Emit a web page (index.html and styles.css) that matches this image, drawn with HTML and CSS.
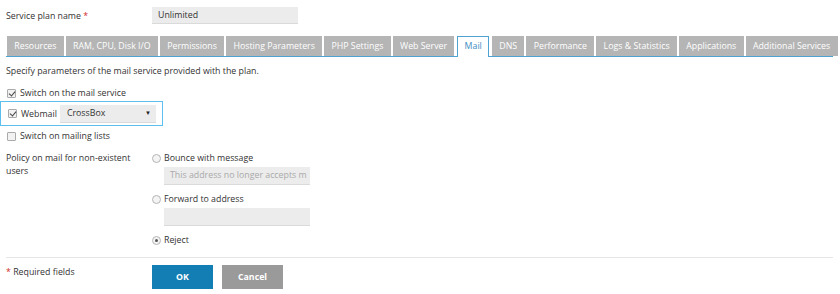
FILE: index.html
```html
<!DOCTYPE html>
<html lang="en">
<head>
  <meta charset="UTF-8">
  <title>Service plan - Mail</title>
  <link rel="stylesheet" href="styles.css">
</head>
<body>

  <div class="form-row name-row">
    <label class="field-label">Service plan name <span class="req">*</span></label>
    <input class="text-input name-input" type="text" value="Unlimited">
  </div>

  <ul class="tabs">
    <li class="tab">Resources</li>
    <li class="tab">RAM, CPU, Disk I/O</li>
    <li class="tab">Permissions</li>
    <li class="tab">Hosting Parameters</li>
    <li class="tab">PHP Settings</li>
    <li class="tab">Web Server</li>
    <li class="tab active">Mail</li>
    <li class="tab">DNS</li>
    <li class="tab">Performance</li>
    <li class="tab">Logs &amp; Statistics</li>
    <li class="tab">Applications</li>
    <li class="tab">Additional Services</li>
  </ul>

  <p class="hint">Specify parameters of the mail service provided with the plan.</p>

  <label class="check-row">
    <span class="check checked"></span> Switch on the mail service
  </label>

  <div class="webmail-box">
    <label class="check-row inline">
      <span class="check checked"></span> Webmail
    </label>
    <div class="select">CrossBox <span class="caret">&#9660;</span></div>
  </div>

  <label class="check-row">
    <span class="check"></span> Switch on mailing lists
  </label>

  <div class="form-row policy-row">
    <div class="field-label">Policy on mail for non-existent users</div>
    <div class="radio-group">
      <label class="radio-row"><span class="radio"></span> Bounce with message</label>
      <div class="text-input sub-input placeholder">This address no longer accepts m</div>
      <label class="radio-row"><span class="radio"></span> Forward to address</label>
      <div class="text-input sub-input"></div>
      <label class="radio-row"><span class="radio selected"></span> Reject</label>
    </div>
  </div>

  <div class="footer">
    <div class="field-label"><span class="req">*</span> Required fields</div>
    <div class="buttons">
      <button class="btn btn-ok">OK</button>
      <button class="btn btn-cancel">Cancel</button>
    </div>
  </div>

</body>
</html>
```

FILE: styles.css
```css
* {
  box-sizing: border-box;
  margin: 0;
  padding: 0;
}
body {
  font-family: "Open Sans", Arial, sans-serif;
  font-size: 8.8px;
  color: #333;
  background: #fff;
  padding: 0 7px 0 6px;
}
.form-row {
  display: flex;
}
.field-label {
  width: 146px;
  flex-shrink: 0;
}
.req {
  color: #d02b2b;
}
.name-row {
  align-items: center;
  padding-top: 7px;
  height: 24px;
}
.text-input {
  font-family: inherit;
  font-size: 8.8px;
  color: #333;
  background: #ececec;
  border: none;
  border-bottom: 1px solid #dadada;
  height: 17px;
  padding: 0 6px;
  outline: none;
}
.name-input {
  width: 146px;
}
.tabs {
  list-style: none;
  display: flex;
  gap: 2px;
  margin-top: 12px;
  padding-left: 1px;
  border-bottom: 1px solid #4fa3d2;
  height: 21px;
}
.tab {
  background: #b5b5b5;
  color: #fff;
  height: 20px;
  line-height: 20px;
  padding: 0 7.3px;
  white-space: nowrap;
}
.tab.active {
  background: #fff;
  color: #3c8dc4;
  border: 1px solid #4fa3d2;
  border-bottom: none;
  height: 21px;
  line-height: 19px;
  padding: 0 6.2px;
  margin: 0 1px;
}
.hint {
  margin-top: 8px;
  line-height: 12px;
}
.check-row {
  display: flex;
  align-items: center;
  gap: 4px;
  height: 12px;
  margin-top: 10px;
}
.check {
  width: 9px;
  height: 9px;
  margin-left: 1px;
  border: 1px solid #aaa;
  border-radius: 1px;
  background: #f2f2f2;
  position: relative;
}
.check.checked::after {
  content: "";
  position: absolute;
  left: 2px;
  top: 0;
  width: 3px;
  height: 5px;
  border: solid #444;
  border-width: 0 1.5px 1.5px 0;
  transform: rotate(40deg);
}
.webmail-box {
  display: flex;
  align-items: center;
  gap: 3px;
  width: 163px;
  height: 25px;
  margin: 2px 0 0 -6px;
  padding-left: 6px;
  border: 1px solid #5bc0ee;
}
.check-row.inline {
  margin-top: 0;
}
.select {
  display: flex;
  justify-content: space-between;
  align-items: center;
  width: 96px;
  height: 18px;
  padding: 0 5px 0 7px;
  background: #ececec;
  border-bottom: 1px solid #dadada;
}
.caret {
  font-size: 6px;
  color: #222;
}
.webmail-box + .check-row {
  margin-top: 4px;
}
.policy-row {
  margin-top: 10px;
  line-height: 13px;
}
.policy-row .field-label {
  padding-right: 16px;
}
.radio-group {
  display: flex;
  flex-direction: column;
  align-items: flex-start;
}
.radio-row {
  display: flex;
  align-items: center;
  gap: 3px;
  height: 12px;
}
.radio {
  width: 9px;
  height: 9px;
  border: 1px solid #b5b5b5;
  border-radius: 50%;
  background: #f4f4f4;
  position: relative;
}
.radio.selected::after {
  content: "";
  position: absolute;
  left: 2px;
  top: 2px;
  width: 3px;
  height: 3px;
  border-radius: 50%;
  background: #555;
}
.sub-input {
  width: 146px;
  height: 18px;
  line-height: 17px;
  margin: 3px 0 8px 12px;
}
.placeholder {
  color: #aaa;
  white-space: nowrap;
  overflow: hidden;
}
.footer {
  display: flex;
  align-items: flex-start;
  margin-top: 11px;
  padding-top: 7px;
  border-top: 1px solid #e6e6e6;
}
.footer .field-label {
  line-height: 14px;
}
.buttons {
  display: flex;
  gap: 9px;
}
.btn {
  font-family: inherit;
  font-size: 8.8px;
  font-weight: bold;
  color: #fff;
  border: none;
  width: 61px;
  height: 24px;
}
.btn-ok {
  background: #137eb3;
}
.btn-cancel {
  background: #9a9a9a;
}
```
